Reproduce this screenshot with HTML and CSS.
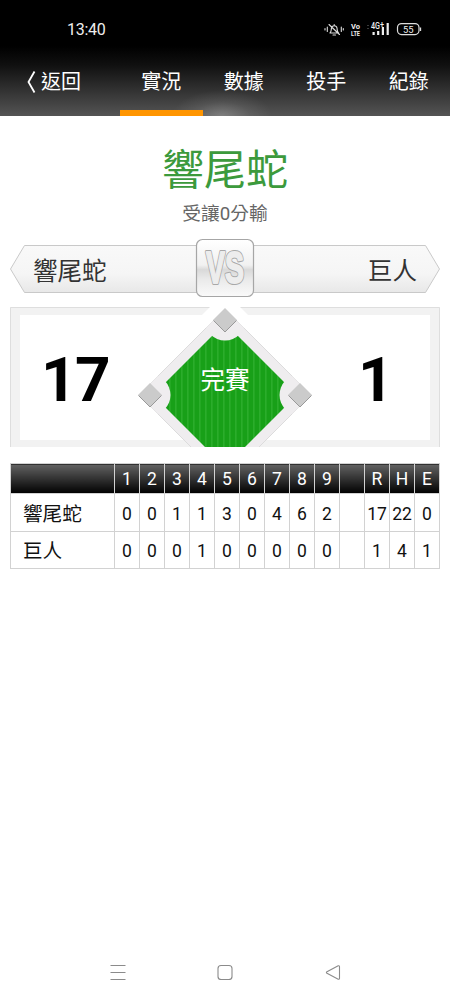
FILE: index.html
```
<!DOCTYPE html>
<html lang="zh-Hant">
<head>
<meta charset="utf-8">
<title>實況</title>
<link rel="stylesheet" href="styles.css">
</head>
<body>
<header class="header">
  <div class="status">
    <span class="clock">13:40</span>
    <svg class="status-icons" width="100" height="18" viewBox="0 0 100 18">
      <g fill="none" stroke="#ddd" stroke-width="1.1" stroke-linecap="round">
        <path d="M6 13h8.500M6 13c1.500-1.500 1-3 1.500-5 .5-3 5-3 5.500 0 .3 2 0 3.500 1.500 5M9 15h2.500M10.200 4.500v1M5 4.500l10.500 10"/>
        <path d="M1 8.500v1.500M3.300 7v4.500M17.300 7v4.500M19.300 8.500v1.500"/>
      </g>
      <text class="tiny" x="27" y="8.500" textLength="9" lengthAdjust="spacingAndGlyphs">Vo</text>
      <text class="tiny" x="27" y="15.500" textLength="9" lengthAdjust="spacingAndGlyphs">LTE</text>
      <text class="net" x="47" y="8.500" textLength="13" lengthAdjust="spacingAndGlyphs">4G<tspan dy="-1">+</tspan></text>
      <path d="M44 5v1M44 8v1" stroke="#777" stroke-width="1"/>
      <path d="M49.600 12v3M54.200 11v4M58.900 7v8M63.700 3v12" stroke="#eee" stroke-width="2.200"/>
      <rect x="73.500" y="3.600" width="21.500" height="11" rx="4" fill="none" stroke="#ddd" stroke-width="1.200"/>
      <path d="M96.500 7.500v3.500" stroke="#ddd" stroke-width="1.300"/>
      <text class="battery" x="79" y="12.500" textLength="10.500" lengthAdjust="spacingAndGlyphs">55</text>
    </svg>
  </div>
  <nav class="tabs">
    <a class="back"><svg width="10" height="24" viewBox="0 0 10 24"><path d="M8.500 1.500 2.500 12l6 10.500" fill="none" stroke="#fff" stroke-width="1.800"/></svg><span>返回</span></a>
    <a class="tab active">實況</a>
    <a class="tab">數據</a>
    <a class="tab">投手</a>
    <a class="tab">紀錄</a>
  </nav>
</header>
<main class="main">
  <h1 class="title">響尾蛇</h1>
  <p class="handicap">受讓0分輸</p>
  <section class="versus">
    <svg class="versus-bg" width="430" height="60" viewBox="0 0 430 60">
      <defs>
        <linearGradient id="bar" x2="0" y2="1"><stop offset="0" stop-color="#f9f9f9"/><stop offset=".6" stop-color="#f5f5f5"/><stop offset="1" stop-color="#e8e8e8"/></linearGradient>
        <linearGradient id="badge" x2="0" y2="1"><stop offset="0" stop-color="#fff"/><stop offset=".45" stop-color="#f1f1f1"/><stop offset=".53" stop-color="#d9d9d9"/><stop offset=".7" stop-color="#eaeaea"/><stop offset="1" stop-color="#fafafa"/></linearGradient>
      </defs>
      <path d="M.5 31 14.500 7.500H415.500L429.500 31 415.500 54.500H14.500Z" fill="url(#bar)" stroke="#c9c9c9"/>
      <rect x="186.500" y="1.500" width="57" height="57" rx="6" fill="url(#badge)" stroke="#a6a6a6" stroke-width="1.200"/>
      <text class="vs vs-edge" x="196" y="45" textLength="38" lengthAdjust="spacingAndGlyphs">VS</text>
      <text class="vs vs-face" x="196" y="45" textLength="38" lengthAdjust="spacingAndGlyphs">VS</text>
    </svg>
    <span class="team">響尾蛇</span>
    <span class="team">巨人</span>
  </section>
  <section class="score">
    <svg class="field" width="430" height="140" viewBox="10 307 430 140">
      <defs>
        <pattern id="grass" x="1" width="6" height="6" patternUnits="userSpaceOnUse"><rect width="6" height="6" fill="#18a018"/><rect width="1.600" height="6" fill="#2bad2b"/></pattern>
        <path id="base" d="M0-12 12 0 0 12-12 0Z"/>
        <clipPath id="infield"><path d="M225 309 311 395 225 481 139 395Z"/></clipPath>
      </defs>
      <path d="M10 307H440V447H10Z" fill="#f2f2f2"/>
      <path d="M10.500 447V307.500H439.500V447" fill="none" stroke="#dedede"/>
      <path d="M20 315H430V440H20Z" fill="#fff"/>
      <path d="M210 307H240L300 367V384L225 309 150 384V367Z" fill="#fff"/>
      <path d="M225 309 311 395 225 481 139 395Z" fill="#efedef" stroke="#dcdcdc"/>
      <g clip-path="url(#infield)">
        <path d="M225 323 297 395 225 467 153 395Z" fill="url(#grass)"/>
        <g fill="#efedef"><circle cx="225" cy="320" r="20.500"/><circle cx="150" cy="395" r="20.500"/><circle cx="300" cy="395" r="20.500"/></g>
      </g>
      <g fill="#cbcbcb"><use href="#base" x="225" y="320"/><use href="#base" x="150" y="395"/><use href="#base" x="300" y="395"/></g>
      <path d="M213.500 320.500 225 332 236.500 320.500M138.500 395.500 150 407 161.500 395.500M288.500 395.500 300 407 311.500 395.500" fill="none" stroke="#999"/>
    </svg>
    <strong class="runs">17</strong>
    <span class="state">完賽</span>
    <strong class="runs">1</strong>
  </section>
  <table class="innings">
    <colgroup><col class="name-col"><col span="13"></colgroup>
    <thead><tr><th></th><th>1</th><th>2</th><th>3</th><th>4</th><th>5</th><th>6</th><th>7</th><th>8</th><th>9</th><th></th><th>R</th><th>H</th><th>E</th></tr></thead>
    <tbody>
      <tr><td class="name">響尾蛇</td><td>0</td><td>0</td><td>1</td><td>1</td><td>3</td><td>0</td><td>4</td><td>6</td><td>2</td><td></td><td>17</td><td>22</td><td>0</td></tr>
      <tr><td class="name">巨人</td><td>0</td><td>0</td><td>0</td><td>1</td><td>0</td><td>0</td><td>0</td><td>0</td><td>0</td><td></td><td>1</td><td>4</td><td>1</td></tr>
    </tbody>
  </table>
</main>
<footer class="navbar">
  <svg width="16" height="16" viewBox="0 0 16 16"><path d="M.5 1.500h15M.5 8.500h15M.5 15.500h15"/></svg>
  <svg width="16" height="16" viewBox="0 0 16 16"><rect x="1" y="1.500" width="14" height="14" rx="3"/></svg>
  <svg width="16" height="16" viewBox="0 0 16 16"><path d="M13.200 1.800 2 7.700Q.8 8.500 2 9.300L13.200 15.200Q14.500 15.500 14.500 14.200V2.800Q14.500 1.500 13.200 1.800Z"/></svg>
</footer>
</body>
</html>
```

FILE: styles.css
```
* { box-sizing: border-box; }
body {
  margin: 0;
  height: 1000px;
  display: flex;
  flex-direction: column;
  background: #fff;
  font-family: Roboto, "Noto Sans CJK TC", sans-serif;
}
.header {
  height: 116px;
  color: #fff;
  background:
    radial-gradient(ellipse 50px 26px at 222px 116px, rgba(255, 255, 255, .25), rgba(255, 255, 255, .08) 55%, transparent),
    linear-gradient(#000 0, #000 46px, #101010 65px, #545454 116px);
}
.status {
  height: 48px;
  padding: 10px 26px 0 67px;
  display: flex;
  justify-content: space-between;
  align-items: center;
}
.clock { font-size: 16px; letter-spacing: -.3px; color: #eee; }
.tiny, .net, .battery { fill: #eee; font-family: Roboto, sans-serif; }
.tiny { font-size: 7.5px; font-weight: 700; }
.net { font-size: 8.5px; font-weight: 500; }
.battery { font-size: 9.5px; }
.tabs {
  height: 68px;
  display: grid;
  grid-template-columns: 120px repeat(4, 82.5px);
  font-size: 20px;
}
.back, .tab { display: flex; align-items: center; line-height: 70px; height: 68px; }
.back { padding-left: 26px; gap: 5px; }
.tab { justify-content: center; }
.active { box-shadow: inset 0 -6px #ff9500; }
.main { flex: 1; padding: 0 10px; }
.title {
  margin: 25px 0 0;
  text-align: center;
  font-size: 42px;
  line-height: 60px;
  font-weight: 400;
  color: #3c9a3c;
}
.handicap {
  margin: 0;
  height: 37px;
  text-align: center;
  font-size: 18.7px;
  line-height: 27px;
  color: #666;
}
.versus {
  position: relative;
  height: 69px;
  padding: 0 23px 7px;
  display: flex;
  justify-content: space-between;
  align-items: center;
  font-size: 24.5px;
  color: #333;
}
.versus-bg, .field { position: absolute; left: 0; top: 0; }
.team { position: relative; }
.vs {
  font-family: "Liberation Sans", Arial, sans-serif;
  font-weight: 700;
  font-size: 45px;
  stroke-linejoin: round;
}
.vs-edge { fill: #a8a8a8; stroke: #a8a8a8; stroke-width: 4px; }
.vs-face { fill: #ededed; stroke: #ededed; stroke-width: 1.8px; }
.score {
  position: relative;
  height: 140px;
  display: grid;
  grid-template-columns: 130px 170px 130px;
  justify-items: center;
  align-items: center;
}
.runs { position: relative; font-size: 62px; letter-spacing: -1.5px; line-height: 146px; font-weight: 700; }
.state { position: relative; font-size: 24.5px; line-height: 36px; color: #fff; align-self: start; margin-top: 56px; }
.innings {
  width: 430px;
  margin-top: 16px;
  table-layout: fixed;
  border-collapse: collapse;
  font-size: 17.5px;
}
.innings col { width: 25px; }
.innings .name-col { width: 104px; }
.innings th, .innings td {
  padding: 3px 0 0;
  text-align: center;
  line-height: 20px;
  border: 1px solid #d2d2d2;
}
.innings th {
  padding-top: 1px;
  height: 30px;
  color: #fff;
  font-weight: 400;
  background: linear-gradient(#626262, #000);
}
.innings td { height: 37.5px; color: #111; }
.innings .name { padding: 5px 0 0 12px; text-align: left; font-size: 19.6px; }
.navbar {
  height: 56px;
  padding: 0 109.5px;
  display: flex;
  justify-content: space-between;
  align-items: center;
}
.navbar svg { fill: none; stroke: #8b8b8b; stroke-width: 1.1; }
```
